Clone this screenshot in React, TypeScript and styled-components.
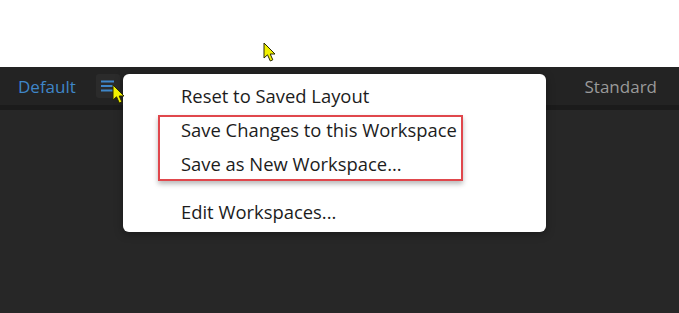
import React from 'react';
import styled, { createGlobalStyle } from 'styled-components';

const GlobalStyle = createGlobalStyle`
  html, body {
    margin: 0;
    padding: 0;
    background: #ffffff;
  }
  body {
    font-family: "Open Sans", "Noto Sans", sans-serif;
  }
`;

const Page = styled.div`
  position: relative;
  width: 679px;
  height: 313px;
  overflow: hidden;
  display: flex;
  flex-direction: column;
  background: #ffffff;
`;

const TopSpace = styled.div`
  height: 67px;
  background: #ffffff;
`;

const Toolbar = styled.div`
  height: 38px;
  background: #232323;
  display: flex;
  align-items: center;
  padding: 0 22px 0 18px;
  border-bottom: 5px solid #1b1b1b;
`;

const Tab = styled.span<{ active?: boolean }>`
  font-size: 17px;
  color: ${p => (p.active ? '#3f86c8' : '#9a9a9a')};
`;

const MenuButton = styled.div`
  width: 24px;
  height: 24px;
  margin-left: 20px;
  border-radius: 3px;
  background: #2b2b2b;
  display: flex;
  align-items: center;
  justify-content: center;
`;

const Spacer = styled.div`
  flex: 1;
`;

const Body = styled.div`
  flex: 1;
  background: #272727;
`;

const Menu = styled.div`
  position: absolute;
  left: 123px;
  top: 74px;
  width: 423px;
  height: 158px;
  background: #ffffff;
  border-radius: 6px;
  box-shadow: 0 2px 8px rgba(0, 0, 0, 0.35);
  padding: 8px 0 0 58px;
  box-sizing: border-box;
  display: flex;
  flex-direction: column;
`;

const Item = styled.div`
  font-size: 18.4px;
  color: #1c1c1c;
  height: 34px;
  line-height: 28px;
`;

const Separator = styled.div`
  height: 14px;
`;

const Highlight = styled.div`
  position: absolute;
  left: 158px;
  top: 115px;
  width: 305px;
  height: 66px;
  border: 2px solid #e0474c;
  box-sizing: border-box;
  box-shadow: 0 3px 5px rgba(0, 0, 0, 0.28);
`;

const Cursor = styled.svg<{ x: number; y: number }>`
  position: absolute;
  left: ${p => p.x}px;
  top: ${p => p.y}px;
`;

const Pointer = ({ x, y }: { x: number; y: number }) => (
  <Cursor x={x} y={y} width="16" height="22" viewBox="0 0 16 22">
    <path
      d="M1 1 L1 16 L4.5 12.8 L7.3 19 L9.8 17.8 L7.2 12 L12 12 Z"
      fill="#f2f200"
      stroke="#2a2a00"
      strokeWidth="1"
      strokeLinejoin="round"
    />
  </Cursor>
);

const App: React.FC = () => {
  return (
    <Page>
      <GlobalStyle />
      <TopSpace />
      <Toolbar>
        <Tab active>Default</Tab>
        <MenuButton>
          <svg width="14" height="12" viewBox="0 0 14 12">
            <rect x="0" y="0.5" width="13" height="2" fill="#3f86c8" />
            <rect x="0" y="5" width="13" height="2" fill="#3f86c8" />
            <rect x="0" y="9.5" width="13" height="2" fill="#3f86c8" />
          </svg>
        </MenuButton>
        <Spacer />
        <Tab>Standard</Tab>
      </Toolbar>
      <Body />
      <Menu>
        <Item>Reset to Saved Layout</Item>
        <Item>Save Changes to this Workspace</Item>
        <Item>Save as New Workspace...</Item>
        <Separator />
        <Item>Edit Workspaces...</Item>
      </Menu>
      <Highlight />
      <Pointer x={112} y={84} />
      <Pointer x={263} y={42} />
    </Page>
  );
};

export default App;
